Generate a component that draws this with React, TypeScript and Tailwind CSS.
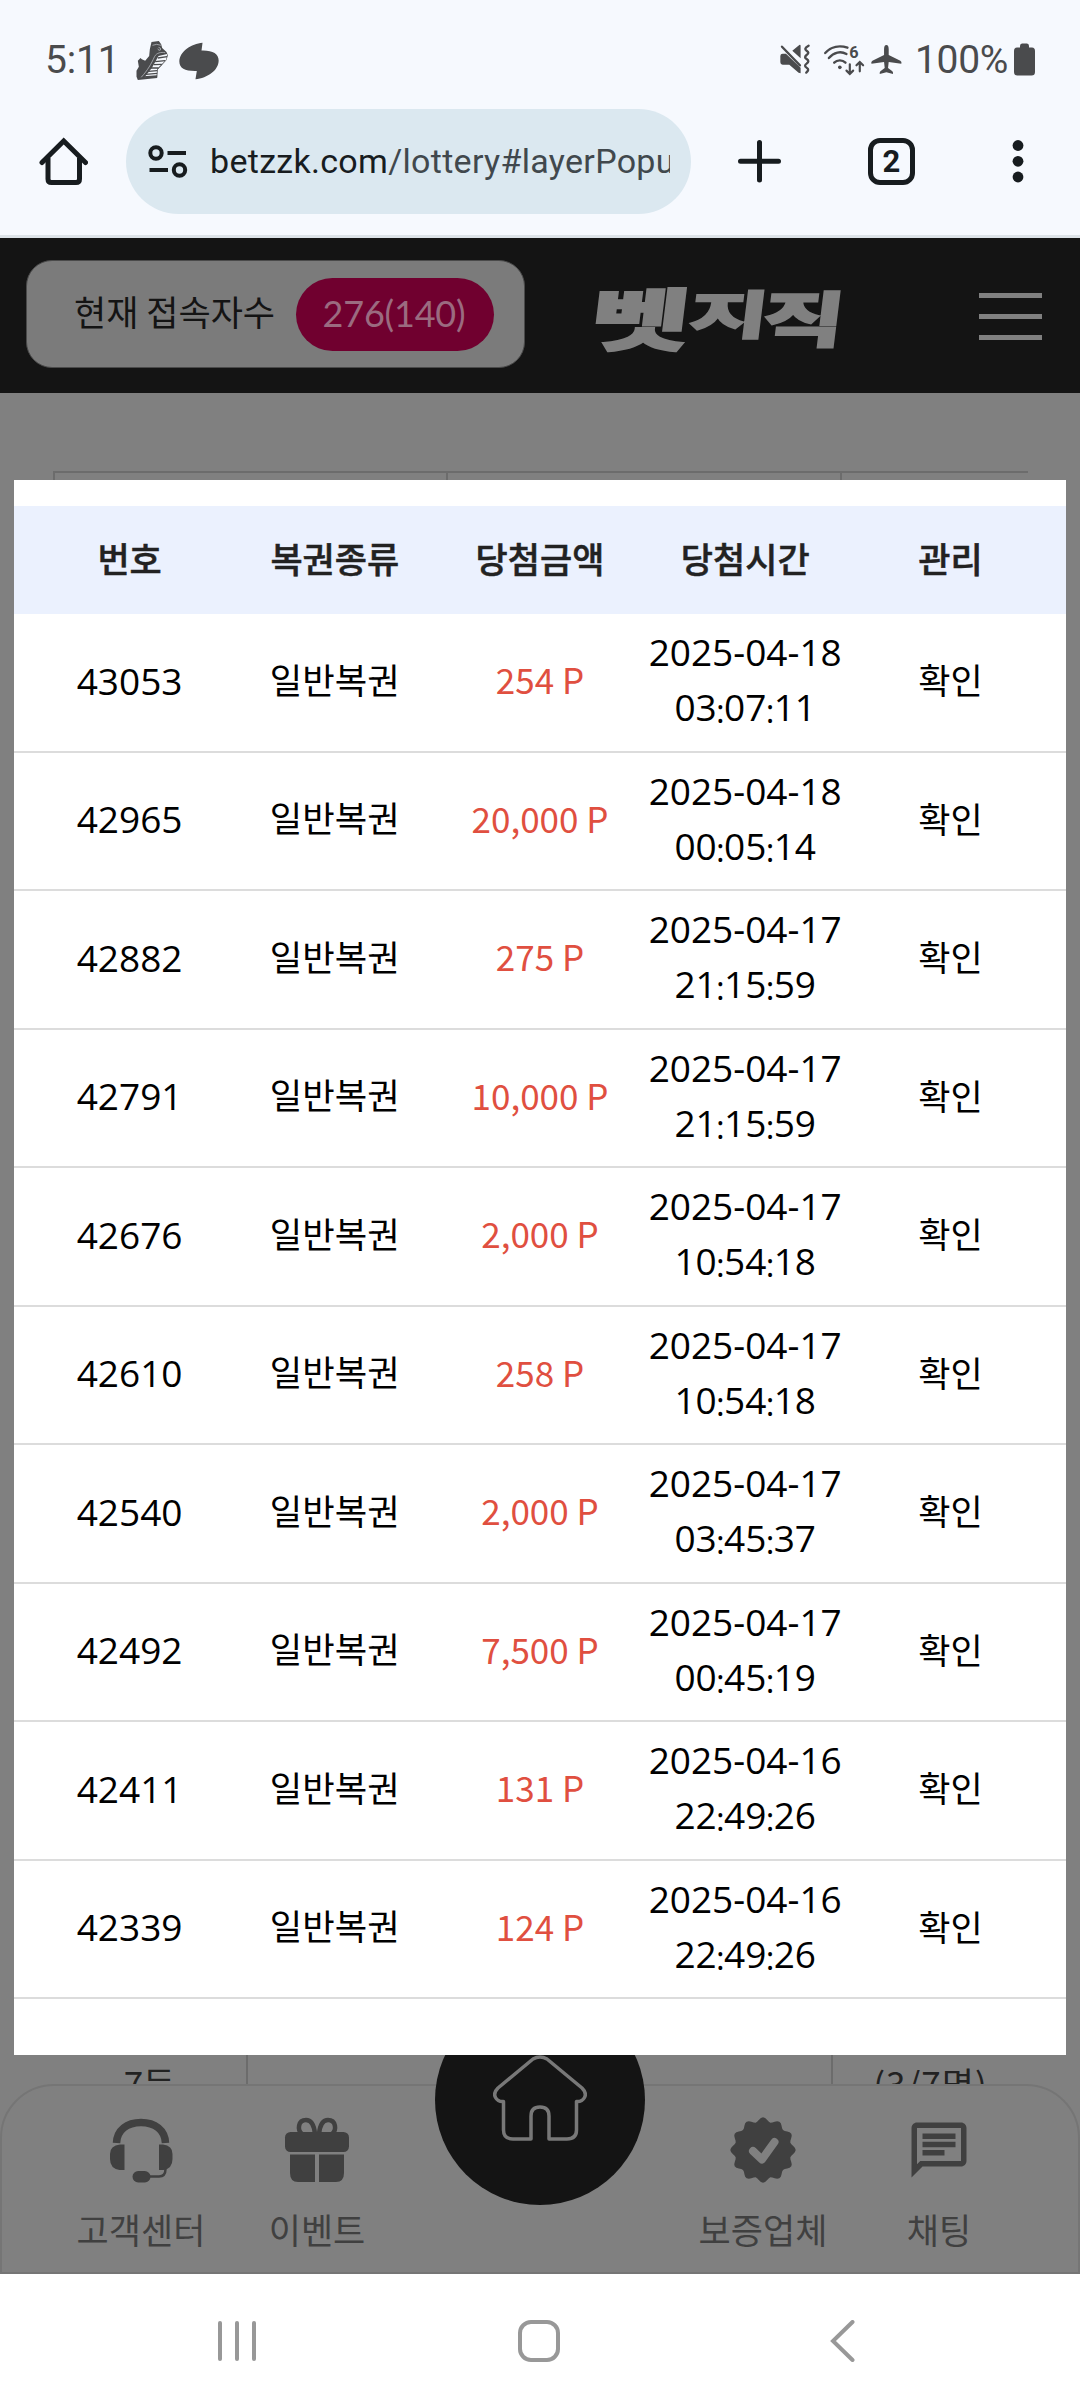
import React from "react";

type Row = { id: string; amount: string; date: string; time: string };

const rows: Row[] = [
  { id: "43053", amount: "254 P", date: "2025-04-18", time: "03:07:11" },
  { id: "42965", amount: "20,000 P", date: "2025-04-18", time: "00:05:14" },
  { id: "42882", amount: "275 P", date: "2025-04-17", time: "21:15:59" },
  { id: "42791", amount: "10,000 P", date: "2025-04-17", time: "21:15:59" },
  { id: "42676", amount: "2,000 P", date: "2025-04-17", time: "10:54:18" },
  { id: "42610", amount: "258 P", date: "2025-04-17", time: "10:54:18" },
  { id: "42540", amount: "2,000 P", date: "2025-04-17", time: "03:45:37" },
  { id: "42492", amount: "7,500 P", date: "2025-04-17", time: "00:45:19" },
  { id: "42411", amount: "131 P", date: "2025-04-16", time: "22:49:26" },
  { id: "42339", amount: "124 P", date: "2025-04-16", time: "22:49:26" },
];

const columns = ["번호", "복권종류", "당첨금액", "당첨시간", "관리"];

function StatusBar() {
  return (
    <div className="flex h-[109px] items-start justify-between pl-[45px] pr-[45px] pt-[36px] font-['Roboto'] text-[39px] leading-[46px] text-[#4a4b4d]">
      <div className="flex items-start">
        <span className="w-[91px] pt-px tracking-[-0.2px]">5:11</span>
        <svg className="mt-[5px] h-[39px] w-[32px]" viewBox="17 15 95 117">
          <path d="M63 18 85 15 92 25 95 36 108 48 112 58 108 72 90 92 82 100 80 126 22 132 18 122 18 104 25 92 22 74 30 66 34 70 44 74 56 60 58 40Z" fill="#4a4b4d" />
          <path d="M84 60 110 54 107 71 80 98 78 120 42 124 64 96Z" fill="#f6f9fe" />
          <path d="M82 66 110 62M74 77 104 74M70 86 94 85M60 96 84 96M54 106 80 104M46 115 80 112M38 123 80 120" stroke="#4a4b4d" strokeWidth="4" />
          <path d="M32 124C52 102 62 84 72 62 78 50 92 48 104 50M66 28Q78 22 92 28M84 34Q92 34 90 42Q84 46 82 38" stroke="#c9ccd1" strokeWidth="2" fill="none" />
        </svg>
        <svg className="ml-[11px] mt-[6px] h-[38px] w-[40px]" viewBox="146 18 119 111">
          <path d="M216 19 213 42C246 41 264 51 264 72 264 101 231 124 195 128L199 103C165 104 147 96 147 75 147 45 183 22 216 19Z" fill="#4a4b4d" />
        </svg>
      </div>
      <div className="flex items-start">
        <svg className="mr-[12px] mt-[8px] h-[32px] w-[123px]" viewBox="30 24 370 96" fill="none" stroke="#4a4b4d" strokeLinecap="round">
          <path d="M38 53H48L92 95V112L86 110 58 86H38Q31 86 31 79V60Q31 53 38 53ZM67 44 88 27Q92 25 92 30V67Z" fill="#4a4b4d" stroke="none" />
          <path d="M36 32 90 88" strokeWidth="7" />
          <path d="M116 29C104 36 104 40 110 44 117 49 117 52 110 57 104 62 104 65 110 69 117 74 117 78 110 83 104 87 104 91 110 95 117 99 116 104 109 110" strokeWidth="7" />
          <path d="M166 51C184 31 210 27 233 35M177 66C192 48 213 44 230 54M193 80C202 71 218 71 227 80" strokeWidth="7" />
          <circle cx="210" cy="94" r="5.5" fill="#4a4b4d" stroke="none" />
          <path d="M240 85V113M230 104 240 114 250 104M270 106V79M260 88 270 78 280 88" strokeWidth="6.5" />
          <text x="238" y="65" fill="#4a4b4d" stroke="none" fontFamily="Roboto" fontWeight="700" fontSize="49">6</text>
          <path d="M350 27Q357 27 357 40V57L392 74Q397 77 395 83L357 78 355 96 368 106Q371 110 370 114L350 109 330 114Q329 110 332 106L345 96 343 78 305 83Q303 77 308 74L343 57V40Q343 27 350 27Z" fill="#4a4b4d" stroke="none" />
        </svg>
        <span className="w-[97px] pt-px tracking-[-0.3px]">100%</span>
        <svg className="ml-[2px] mt-[7px] h-[33px] w-[21px]" viewBox="0 0 21 33">
          <path d="M6 3Q6 .5 8 .5H13Q15 .5 15 3V4.5H18Q21 4.500 21 8V29Q21 32.500 17.500 32.500H3.500Q0 32.500 0 29V8Q0 4.500 3 4.500H6Z" fill="#4a4b4d" />
        </svg>
      </div>
    </div>
  );
}

function BrowserBar() {
  return (
    <div className="flex h-[129px] items-start border-b-[3px] border-[#dde3e8]">
      <svg className="ml-[39px] mt-[28px] h-[49px] w-[49px]" viewBox="0 0 49 49" fill="none" stroke="#171c1f" strokeWidth="5">
        <path d="M9 21V42Q9 45.500 12.500 45.500H37Q40.500 45.500 40.500 42V21" />
        <path d="M3 25.500 24.700 4 46.500 25.500" strokeLinecap="round" />
      </svg>
      <div className="ml-[38px] flex h-[105px] w-[565px] items-center rounded-full bg-[#dbe8f0] pl-[22px]">
        <svg className="h-[34px] w-[40px] shrink-0" viewBox="0 0 40 34" fill="none" stroke="#171c1f" strokeWidth="4">
          <circle cx="8" cy="8" r="5.700" />
          <path d="M19.500 8H38M1.500 25H20" />
          <circle cx="31.500" cy="25" r="5.700" />
        </svg>
        <div className="ml-[22px] w-[460px] overflow-hidden whitespace-nowrap pb-px font-['Roboto'] text-[34px] leading-[44px] tracking-[0.3px] text-[#41484d]">
          <span className="text-[#171c1f]">betzzk.com</span>/lottery#layerPopup
        </div>
      </div>
      <svg className="ml-[46px] mt-[30px] h-[44px] w-[44px]" viewBox="0 0 44 44" stroke="#171c1f" strokeWidth="5" strokeLinecap="round">
        <path d="M22.500 3.500V41M3.500 22.300H41.500" />
      </svg>
      <div className="ml-[87px] mt-[29px] flex h-[47px] w-[47px] items-center justify-center rounded-[12px] border-[5px] border-[#171c1f] font-['Roboto'] text-[31px] font-bold leading-none text-[#171c1f]">
        2
      </div>
      <svg className="ml-[97px] mt-[30px] h-[44px] w-[12px]" viewBox="0 0 12 44" fill="#171c1f">
        <circle cx="6" cy="6.500" r="5.400" />
        <circle cx="6" cy="22.300" r="5.400" />
        <circle cx="6" cy="38" r="5.400" />
      </svg>
    </div>
  );
}

function Wordmark() {
  return (
    <div className="ml-[65px] mt-[44px] flex h-[67px] w-[253px] -skew-x-[7deg] items-start text-[72px] font-black leading-[67px] text-[#808080] [-webkit-text-stroke:2px_#808080]">
      <span className="flex w-[102px] justify-center">
        <span className="origin-center scale-x-[1.5] scale-y-[0.94]">벳</span>
      </span>
      <span className="flex w-[74px] justify-center">
        <span className="origin-center -translate-y-[4px] scale-x-[1.2] scale-y-[0.72]">지</span>
      </span>
      <span className="flex w-[77px] justify-center">
        <span className="origin-center scale-x-[1.24] scale-y-[0.84]">직</span>
      </span>
    </div>
  );
}

function SiteHeader() {
  return (
    <header className="flex h-[155px] items-start bg-[#141414]">
      <div className="ml-[26px] mt-[22px] flex h-[108px] w-[499px] items-center rounded-[26px] border border-[#4a4a4a] bg-[#7b7b7b] pl-[47px]">
        <span className="w-[222px] whitespace-nowrap pb-[6px] text-[35px] leading-[40px] text-[#141414]">현재 접속자수</span>
        <span className="flex h-[73px] w-[198px] items-center justify-center rounded-full bg-[#70002f] pb-[2px] pr-[2px] font-['Lato'] text-[36px] tracking-[-0.2px] text-[#9b6b80]">
          276(140)
        </span>
      </div>
      <Wordmark />
      <div className="ml-[136px] mt-[55px] flex w-[63px] flex-col gap-[16px]">
        <span className="h-[5px] bg-[#808080]" />
        <span className="h-[5px] bg-[#808080]" />
        <span className="h-[5px] bg-[#808080]" />
      </div>
    </header>
  );
}

function RankTable() {
  return (
    <main className="flex flex-1 flex-col justify-between pl-[53px] pr-[52px] pt-[78px] text-[35px] leading-[36px] text-[#222]">
      <div className="flex h-[40px] border-l-2 border-t-2 border-[#6c6c6c]">
        <div className="w-[393px] border-r-2 border-[#6c6c6c]" />
        <div className="w-[394px] border-r-2 border-[#6c6c6c]" />
      </div>
      <div className="flex h-[34px] overflow-hidden text-center">
        <div className="w-[195px] border-r-2 border-[#6c6c6c] pt-[15px]">7등</div>
        <div className="w-[585px] border-r-2 border-[#6c6c6c]" />
        <div className="w-[195px] pt-[15px] tracking-[1px]">(3/7명)</div>
      </div>
    </main>
  );
}

function HeadsetIcon() {
  return (
    <svg className="h-[66px] w-[66px]" viewBox="0 0 66 66" fill="#404040">
      <path d="M8.500 26C9 13 19 5.500 33 5.500S57 13 57.500 26" fill="none" stroke="#404040" strokeWidth="7.500" />
      <path d="M12 27.500H16.500V53H11.500Q2 51.500 2 42V37Q2 28.500 12 27.500ZM55 27.500H51V53H55.500Q64.500 51.500 64.500 42V37Q64.500 28.500 55 27.500Z" />
      <rect x="24.500" y="54" width="18" height="11.500" rx="5.700" />
      <path d="M42 59.500H51Q57.500 59.500 57.500 52" fill="none" stroke="#404040" strokeWidth="2.500" />
    </svg>
  );
}

function GiftIcon() {
  return (
    <svg className="h-[66px] w-[66px]" viewBox="0 0 66 66" fill="#404040">
      <path d="M31 17C30 7 27 3 22 3 14 3 13 13 18 17M35 17C36 7 39 3 44 3 52 3 53 13 48 17" fill="none" stroke="#404040" strokeWidth="4.500" />
      <rect x="1" y="15" width="64" height="20" rx="5.500" />
      <path d="M6 37.500H31V65H14Q6 65 6 56ZM35 37.500H60V56Q60 65 52 65H35Z" />
    </svg>
  );
}

function BadgeIcon() {
  const points = Array.from({ length: 96 }, (_, i) => {
    const a = (i / 96) * Math.PI * 2;
    const r = 30.5 + 2.2 * Math.cos(a * 12);
    return (33 + r * Math.sin(a)).toFixed(2) + "," + (33 - r * Math.cos(a)).toFixed(2);
  }).join(" ");
  return (
    <svg className="h-[66px] w-[66px]" viewBox="0 0 66 66">
      <polygon points={points} fill="#404040" />
      <path d="M23 34 32 42.500 44.500 25" fill="none" stroke="#808080" strokeWidth="8" strokeLinecap="round" strokeLinejoin="round" />
    </svg>
  );
}

function ChatIcon() {
  return (
    <svg className="h-[66px] w-[66px]" viewBox="0 0 24 24" fill="#404040">
      <path d="M4 4h16v12H5.170L4 17.170V4m0-2c-1.100 0-1.990.9-1.990 2L2 22l4-4h14c1.100 0 2-.9 2-2V4c0-1.100-.9-2-2-2H4zm2 10h8v2H6v-2zm0-3h12v2H6V9zm0-3h12v2H6V6z" />
    </svg>
  );
}

function NavItem({ icon, label }: { icon: React.ReactNode; label: string }) {
  return (
    <div className="flex w-[176px] flex-col items-center">
      {icon}
      <span className="mt-[26px] whitespace-nowrap text-[35px] leading-[40px] text-[#404040]">{label}</span>
    </div>
  );
}

function BottomNav() {
  return (
    <nav className="relative flex h-[190px] rounded-t-[54px] border-2 border-[#757575] px-[51px] pt-[31px]">
      <NavItem icon={<HeadsetIcon />} label="고객센터" />
      <NavItem icon={<GiftIcon />} label="이벤트" />
      <div className="w-[270px]" />
      <NavItem icon={<BadgeIcon />} label="보증업체" />
      <NavItem icon={<ChatIcon />} label="채팅" />
      <div className="absolute left-[433px] top-[-91px] flex h-[210px] w-[210px] justify-center rounded-full bg-[#141414] pt-[59px]">
        <svg className="h-[88px] w-[94px]" viewBox="0 0 94 88" fill="none" stroke="#787878" strokeWidth="3.5">
          <path d="M40 5Q47 .8 54 5L89 34Q94 39 91.500 43.500Q89 48 83.500 47.500V76Q83.500 85 74 85H56V62Q56 53 47 53T38 62V85H20Q10.500 85 10.500 76V47.500Q5 48 2.500 43.500Q0 39 5 34Z" strokeLinejoin="round" />
        </svg>
      </div>
    </nav>
  );
}

function Time({ value }: { value: string }) {
  const parts = value.split(":");
  return (
    <span>
      {parts.map((p, i) => (
        <React.Fragment key={i}>
          {i > 0 && <span className="relative top-[2px] mx-[-0.7px] text-[33px]">:</span>}
          {p}
        </React.Fragment>
      ))}
    </span>
  );
}

function LotteryPopup() {
  return (
    <section className="absolute left-[14px] top-[242px] flex h-[1575px] w-[1052px] flex-col bg-white pt-[26px] text-[35px] text-black">
      <div className="grid h-[108px] grid-cols-5 items-center bg-[#ebf1fe] px-[13px] pb-[4px] text-center font-medium text-[#222] [-webkit-text-stroke:0.5px_#222]">
        {columns.map((c) => (
          <span key={c}>{c}</span>
        ))}
      </div>
      {rows.map((r) => (
        <div key={r.id} className="grid h-[138.5px] grid-cols-5 items-center border-b-2 border-[#dcdcdc] px-[13px] pb-[6px] text-center">
          <span className="pt-[2px] font-['Open_Sans'] text-[37px]">{r.id}</span>
          <span className="text-[35.3px]">일반복권</span>
          <span className="text-[#e04f40]">{r.amount}</span>
          <span className="flex flex-col items-center pt-[2px] font-['Open_Sans'] text-[37px] leading-[55px]">
            <span>{r.date}</span>
            <Time value={r.time} />
          </span>
          <span>확인</span>
        </div>
      ))}
    </section>
  );
}

function SystemNav() {
  return (
    <div className="flex h-[126px] items-start bg-white pt-[46px]">
      <div className="ml-[218px] mt-px flex h-[40px] w-[38px] justify-between">
        <span className="w-[4px] rounded-full bg-[#989898]" />
        <span className="w-[4px] rounded-full bg-[#989898]" />
        <span className="w-[4px] rounded-full bg-[#989898]" />
      </div>
      <div className="ml-[262px] h-[42px] w-[42px] rounded-[13px] border-4 border-[#989898]" />
      <svg className="ml-[270px] h-[42px] w-[26px]" viewBox="0 0 26 42" fill="none" stroke="#989898" strokeWidth="4" strokeLinecap="round">
        <path d="M22.500 2 3 21 22.500 40" />
      </svg>
    </div>
  );
}

export default function App() {
  return (
    <div className="flex h-[2400px] w-[1080px] flex-col overflow-hidden bg-[#f6f9fe] font-['Noto_Sans_CJK_KR',sans-serif]">
      <StatusBar />
      <BrowserBar />
      <div className="relative flex h-[2036px] flex-col bg-[#808080]">
        <SiteHeader />
        <RankTable />
        <BottomNav />
        <LotteryPopup />
      </div>
      <SystemNav />
    </div>
  );
}
